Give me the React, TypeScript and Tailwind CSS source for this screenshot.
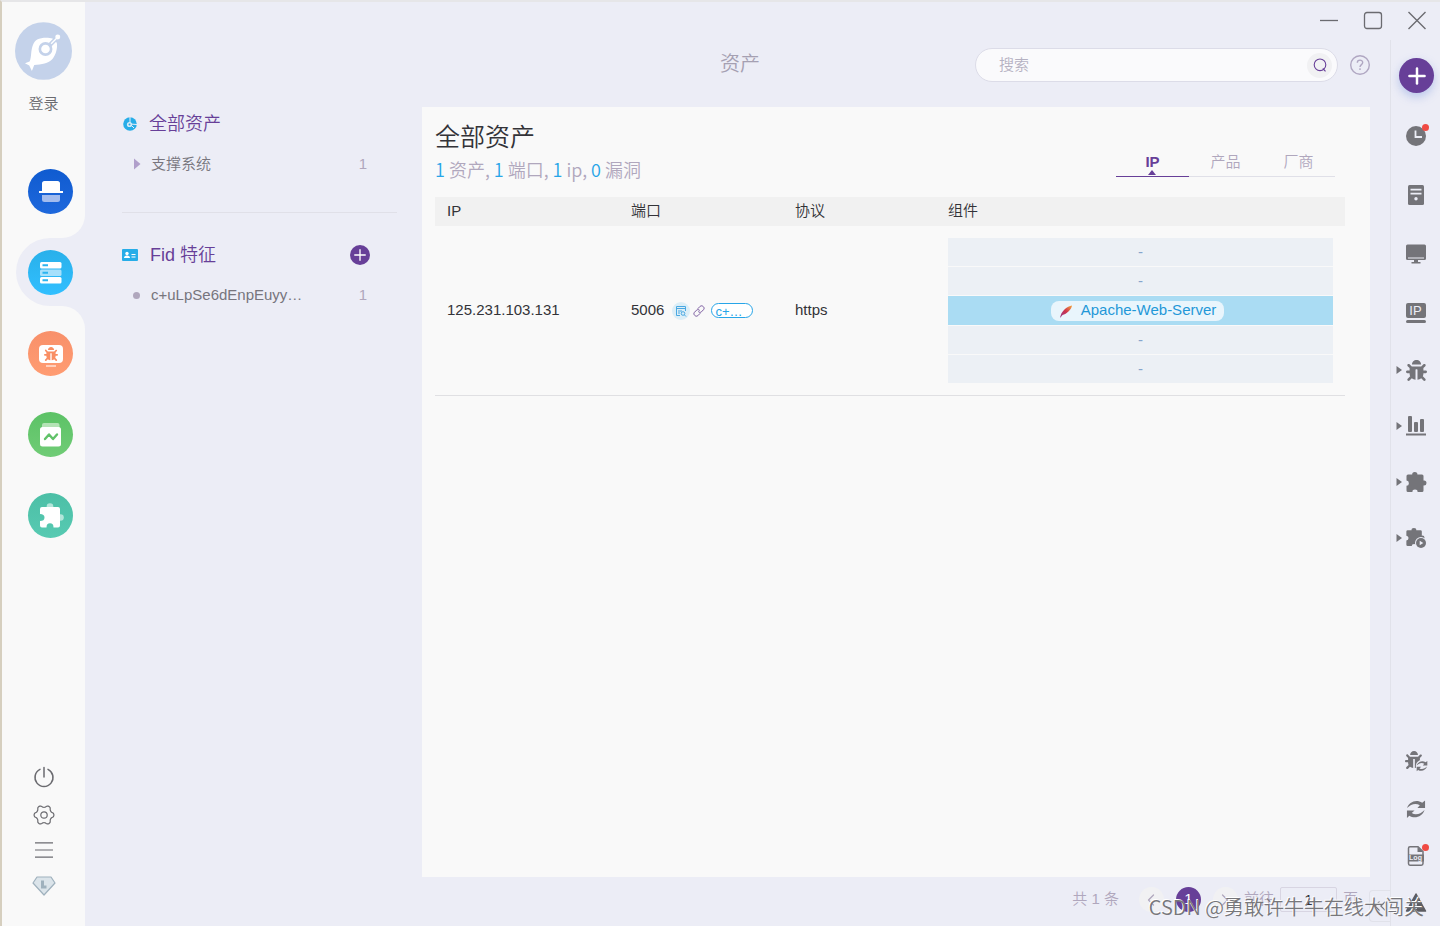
import React from 'react';
import { FaBug } from 'react-icons/fa';
import { ChevronLeft, ChevronRight, ChevronsLeft, Plus } from 'lucide-react';
import clsx from 'clsx';

// six-lobed outline of the settings icon
const gearPoints = Array.from({ length: 72 }, (_, i) => {
  const a = (i * Math.PI) / 36;
  const wave = Math.cos(6 * a);
  const r = 8.8 + 1.1 * Math.sign(wave) * Math.pow(Math.abs(wave), 0.6);
  return `${(11 + r * Math.cos(a)).toFixed(2)},${(11 + r * Math.sin(a)).toFixed(2)}`;
}).join(' ');

const Logo = () => (
  <svg viewBox="45 66 172 174" className="h-[58px] w-[57px]">
    <ellipse cx="131" cy="153" rx="86" ry="87" fill="#c4d2ea" />
    <path d="M158 115C146 112 124 112 112 118C100 125 96 142 94 158C93 170 92 178 89 185L75 190L88 197L96 213L103 195C125 194 146 190 158 177C169 164 174 142 171 128Z" fill="#fff" />
    <path d="M138 147L172 113" stroke="#c4d2ea" strokeWidth="13" />
    <circle cx="137" cy="147" r="17" fill="#fff" stroke="#c4d2ea" strokeWidth="8" />
    <path d="M154 131L172 113" stroke="#fff" strokeWidth="4" />
    <circle cx="174" cy="111" r="7.500" fill="#fff" />
  </svg>
);

const ScanIcon = () => (
  <svg viewBox="0 0 45 45" className="size-full">
    <path d="M14 22V14.500Q14 12 16.500 12H29.500Q32 12 32 14.500V22H35V24H11V22H14Z" fill="#fff" />
    <path d="M14 26H32V30.500Q32 33 29.500 33H16.500Q14 33 14 30.500Z" fill="#a3bcee" />
  </svg>
);

const AssetIcon = () => (
  <svg viewBox="0 0 45 45" className="size-full">
    <rect x="12" y="12" width="21.500" height="6.500" rx="1.500" fill="#fff" />
    <rect x="12" y="19.500" width="21.500" height="6.500" rx="1.500" fill="#a6e0fb" />
    <rect x="12" y="27" width="21.500" height="6.500" rx="1.500" fill="#fff" />
    <path d="M14.500 15.200H20M14.500 22.700H20M14.500 30.200H20" stroke="#2cb4f0" strokeWidth="2" />
  </svg>
);

const VulnIcon = () => (
  <span className="flex size-full flex-col items-center pt-[14px]">
    <span className="flex h-[18px] w-6 items-center justify-center rounded-sm bg-white">
      <FaBug className="size-[14px] text-[#f98e63]" />
    </span>
    <span className="mt-0.5 h-0.5 w-2.5 bg-[#ffd0bd]" />
  </span>
);

const ReportIcon = () => (
  <svg viewBox="0 0 45 45" className="size-full">
    <rect x="14" y="11" width="17.500" height="8" rx="2" fill="#b5e3b6" />
    <rect x="12" y="15" width="21" height="19.500" rx="2.500" fill="#fff" />
    <path d="M17 27L21 22.500L25 27L29 22.500" fill="none" stroke="#61c269" strokeWidth="2.400" strokeLinecap="round" strokeLinejoin="round" />
  </svg>
);

const PluginIcon = () => (
  <svg viewBox="0 0 45 45" className="size-full">
    <circle cx="22" cy="13.500" r="3.300" fill="#b4e6da" />
    <circle cx="32.500" cy="24.500" r="3.300" fill="#b4e6da" />
    <path d="M14 14H30Q32 14 32 16V32.500Q32 34.500 30 34.500H25.500Q25.500 30.300 22 30.300Q18.500 30.300 18.500 34.500H14Q12 34.500 12 32.500V28Q16.500 28 16.500 24.500Q16.500 21 12 21V16Q12 14 14 14Z" fill="#fff" />
  </svg>
);

const navItems = [
  { name: '扫描', icon: <ScanIcon />, bg: 'bg-linear-to-b from-[#0f5bd0] to-[#1e68dc]' },
  { name: '资产', icon: <AssetIcon />, bg: 'bg-linear-to-b from-[#29b0ea] to-[#31bfff]', active: true },
  { name: '漏洞', icon: <VulnIcon />, bg: 'bg-linear-to-b from-[#f8906a] to-[#ff9c72]' },
  { name: '报告', icon: <ReportIcon />, bg: 'bg-linear-to-b from-[#5cc266] to-[#70cc76]' },
  { name: '插件', icon: <PluginIcon />, bg: 'bg-linear-to-b from-[#4cbfa6] to-[#57cab2]' },
];

const LeftNav = () => (
  <nav className="flex w-[83px] shrink-0 flex-col items-center bg-[#f9f9f9] pt-5 pb-7">
    <Logo />
    <a href="#login" className="mt-3 text-[15px] leading-6 text-[#6b6b70]">登录</a>
    <div className="mt-[53px] flex flex-col gap-9 self-end pr-3">
      {navItems.map((item) => (
        <button key={item.name} aria-label={item.name} className="relative size-[45px]">
          {item.active && (
            <svg viewBox="0 0 69 114" className="absolute -top-[35px] -left-3 h-[114px] w-[69px] max-w-none">
              <path d="M69 0A23 23 0 0 1 46 23H34A34 34 0 0 0 34 91H46A23 23 0 0 1 69 114Z" fill="#ecedf6" />
            </svg>
          )}
          <span className={clsx('relative block size-full rounded-full', item.bg)}>{item.icon}</span>
        </button>
      ))}
    </div>
    <div className="mt-auto flex flex-col items-center gap-4">
      <button aria-label="退出" className="size-[22px]">
        <svg viewBox="0 0 22 22" fill="none" stroke="#6b6b70" strokeWidth="1.500" strokeLinecap="round">
          <path d="M11 1.500V11M7 3.400A9 9 0 1 0 15 3.400" />
        </svg>
      </button>
      <button aria-label="设置" className="size-[22px]">
        <svg viewBox="0 0 22 22" fill="none" stroke="#6b6b70" strokeWidth="1.200" strokeLinejoin="round">
          <polygon points={gearPoints} />
          <circle cx="11" cy="11" r="3.200" />
        </svg>
      </button>
      <button aria-label="菜单" className="h-4 w-[22px]">
        <svg viewBox="0 0 22 16" stroke="#6b6b70" strokeWidth="1.200">
          <path d="M2 0.800H20M2 8H20M2 15.200H20" />
        </svg>
      </button>
      <button aria-label="许可" className="flex size-6 items-center">
        <svg viewBox="0 0 24 20" fill="#dbe4ea" stroke="#9fb1bd" strokeWidth="1.200" strokeLinejoin="round">
          <path d="M5 1H19L23 7L12 19L1 7Z" />
          <path d="M10.500 4.500V11H14.500" fill="none" strokeWidth="3" strokeLinejoin="miter" />
        </svg>
      </button>
    </div>
  </nav>
);

const ClockIcon = () => (
  <svg viewBox="0 0 22 22" className="size-[22px]">
    <circle cx="11" cy="11" r="10" fill="#747479" />
    <path d="M10.500 5.500V12H17" fill="none" stroke="#ecedf6" strokeWidth="1.800" />
  </svg>
);

const ServerIcon = () => (
  <svg viewBox="0 0 22 22" className="size-[22px]">
    <rect x="3" y="1" width="16" height="20" rx="1.500" fill="#747479" />
    <path d="M5.500 5.700H16.500M5.500 9.700H16.500" stroke="#ecedf6" strokeWidth="1.800" />
    <circle cx="11" cy="14.700" r="1.700" fill="#ecedf6" />
  </svg>
);

const ScreenIcon = () => (
  <svg viewBox="0 0 22 22" className="size-[22px]">
    <path d="M2.500 1.500H19.500Q21 1.500 21 3V15.500Q21 17 19.500 17H13V19H15.500V20.500H6.500V19H9V17H2.500Q1 17 1 15.500V3Q1 1.500 2.500 1.500Z" fill="#747479" />
    <path d="M3 15H19" stroke="#ecedf6" strokeWidth="1" />
  </svg>
);

const IpIcon = () => (
  <span className="flex w-5 flex-col gap-0.5">
    <span className="rounded-xs bg-[#747479] text-center text-[13px] leading-[15px] text-[#ecedf6]">IP</span>
    <span className="h-[3px] rounded-xs bg-[#747479]" />
  </span>
);

const ChartIcon = () => (
  <svg viewBox="0 0 22 22" className="size-[22px]" fill="#747479">
    <rect x="3" y="1" width="4" height="16" rx="1" />
    <rect x="9" y="7" width="4" height="10" rx="1" />
    <rect x="15" y="4" width="4" height="13" rx="1" />
    <rect x="1" y="18.500" width="20" height="2" />
  </svg>
);

const PuzzleIcon = ({ className }: { className: string }) => (
  <svg viewBox="0 0 22 22" className={className} fill="#747479">
    <path d="M3 3.500H7.200Q7 1 9.800 1Q12.600 1 12.400 3.500H17Q18.500 3.500 18.500 5V9.500Q21.500 9.200 21.500 12Q21.500 14.800 18.500 14.500V19.500Q18.500 21 17 21H12.600Q12.600 18.600 10 18.600Q7.400 18.600 7.400 21H3Q1.500 21 1.500 19.500V14.800Q3.900 14.700 3.900 12.200Q3.900 9.700 1.500 9.600V5Q1.500 3.500 3 3.500Z" />
  </svg>
);

const SyncShape = () => (
  <g fill="#747479">
    <path d="M1 9.500C3 3 11 -0.500 17 4L20 1.500V9.500H12L14.500 6.500C10 3.700 5 5.500 1 9.500Z" />
    <path d="M19.500 11.500C17.500 18 9.500 21.500 3.500 17.500L1 20V12H9L6 14.800C10.500 17.500 15.500 15.500 19.500 11.500Z" />
  </g>
);

const SyncIcon = () => (
  <svg viewBox="0 0 21 21" className="size-5"><SyncShape /></svg>
);

const BugSyncIcon = () => (
  <span className="relative block size-[22px]">
    <FaBug className="size-[18px]" />
    <svg viewBox="-2 -2 25 25" className="absolute -right-0.5 bottom-0 size-[14px]">
      <circle cx="10.500" cy="10.500" r="11" fill="#ecedf6" />
      <SyncShape />
    </svg>
  </span>
);

const PluginPlayIcon = () => (
  <span className="relative block size-[22px]">
    <PuzzleIcon className="size-5" />
    <svg viewBox="0 0 12 12" className="absolute right-0 bottom-0 size-3">
      <circle cx="6" cy="6" r="6" fill="#ecedf6" />
      <circle cx="6" cy="6" r="5" fill="#747479" />
      <path d="M4.700 3.700L8.300 6L4.700 8.300Z" fill="#ecedf6" />
    </svg>
  </span>
);

const LogIcon = () => (
  <span className="relative block h-[22px] w-[18px]">
    <svg viewBox="0 0 18 22" className="size-full">
      <path d="M3 1.800H11L16 6.500V18.500Q16 20.200 14.300 20.200H3Q1.500 20.200 1.500 18.500V3.300Q1.500 1.800 3 1.800Z" fill="none" stroke="#747479" strokeWidth="1.500" />
      <path d="M10.500 2V7H16M1 9.500H17V16.500H1Z" fill="#747479" />
    </svg>
    <span className="absolute inset-x-0 top-[9px] text-center text-[7px] leading-[8px] font-bold text-[#ecedf6]">Log</span>
  </span>
);

const WarnIcon = () => (
  <svg viewBox="0 0 22 22" className="size-[22px]">
    <path d="M11 2L20.500 19H1.500Z" fill="#5c5c62" stroke="#5c5c62" strokeWidth="1.500" strokeLinejoin="round" />
    <path d="M11 8V13.500M11 15V17" stroke="#ecedf6" strokeWidth="1.800" />
  </svg>
);

const topTools = [
  { name: '任务', icon: <ClockIcon />, dot: true },
  { name: '服务', icon: <ServerIcon /> },
  { name: '主机', icon: <ScreenIcon /> },
  { name: 'IP', icon: <IpIcon /> },
];

const menuTools = [
  { name: '漏洞库', icon: <FaBug className="size-[21px]" /> },
  { name: '统计', icon: <ChartIcon /> },
  { name: '插件库', icon: <PuzzleIcon className="size-[22px]" /> },
  { name: '运行插件', icon: <PluginPlayIcon /> },
];

const bottomTools = [
  { name: '重扫', icon: <BugSyncIcon /> },
  { name: '刷新', icon: <SyncIcon /> },
  { name: '日志', icon: <LogIcon />, dot: true },
  { name: '警告', icon: <WarnIcon /> },
];

const RightRail = () => (
  <aside className="flex w-[50px] shrink-0 flex-col border-l border-[#e1e2ea] pt-[18px] text-[#747479]">
    <button aria-label="新建" className="ml-2 flex size-[35px] items-center justify-center rounded-full bg-[#673f98] text-white shadow-[0_4px_10px_rgba(110,140,220,0.4)]">
      <Plus size={26} strokeWidth={2.3} />
    </button>
    <div className="mt-[13px] flex flex-col">
      {topTools.map((t) => (
        <button key={t.name} aria-label={t.name} className="relative flex h-[59px] items-center justify-center">
          {t.icon}
          {t.dot && <span className="absolute top-[18px] right-[11px] size-[7px] rounded-full bg-[#f04a43]" />}
        </button>
      ))}
      {menuTools.map((t) => (
        <button key={t.name} aria-label={t.name} className="flex h-14 items-center gap-[3px] pl-[5px]">
          <svg viewBox="0 0 6 8" className="h-2 w-1.5 shrink-0"><path d="M0.500 0L6 4L0.500 8Z" fill="#747479" /></svg>
          <span className="flex w-[22px] justify-center">{t.icon}</span>
        </button>
      ))}
    </div>
    <div className="mt-auto flex flex-col">
      {bottomTools.map((t) => (
        <button key={t.name} aria-label={t.name} className="relative flex h-[47px] items-center justify-center">
          {t.icon}
          {t.dot && <span className="absolute top-3 right-[11px] size-[7px] rounded-full bg-[#f04a43]" />}
        </button>
      ))}
    </div>
  </aside>
);

const WindowBar = () => (
  <div className="flex h-[38px] items-center justify-end gap-6 pr-[13px]">
    <button aria-label="最小化" className="size-5">
      <svg viewBox="0 0 20 20" stroke="#6b6b70" strokeWidth="1.300"><path d="M1 9.500H19" /></svg>
    </button>
    <button aria-label="最大化" className="size-5">
      <svg viewBox="0 0 20 20" fill="none" stroke="#6b6b70" strokeWidth="1.300"><rect x="1.500" y="1.500" width="17" height="16" rx="2.500" /></svg>
    </button>
    <button aria-label="关闭" className="size-5">
      <svg viewBox="0 0 20 20" stroke="#6b6b70" strokeWidth="1.400"><path d="M1.500 1L18.500 18M18.500 1L1.500 18" /></svg>
    </button>
  </div>
);

const Header = () => (
  <header className="grid grid-cols-[1fr_auto_1fr] items-center pt-2 pr-5 pl-[25px]">
    <span />
    <h1 className="pb-0.5 text-[20px] leading-[30px] text-[#a5a0b2]">资产</h1>
    <div className="flex items-center justify-end gap-3">
      <div className="flex h-[34px] max-w-[363px] flex-1 items-center rounded-full border border-[#dcdce8] bg-[#fafafc] pr-[5px] pl-[23px]">
        <input aria-label="搜索" placeholder="搜索" className="min-w-0 flex-1 bg-transparent text-[15px] outline-none placeholder:text-[#b5b1c2]" />
        <button aria-label="开始搜索" className="flex size-[25px] items-center justify-center rounded-full bg-[#f1f1f3]">
          <svg viewBox="0 0 14 14" className="size-[14px]" fill="none" stroke="#673f98" strokeWidth="1.100">
            <circle cx="7" cy="6.800" r="5.800" />
            <path d="M9.800 10.500L12.500 13.300" />
          </svg>
        </button>
      </div>
      <button aria-label="帮助" className="size-5">
        <svg viewBox="0 0 20 20" fill="none" stroke="#b0a7c2" strokeWidth="1.400">
          <circle cx="10" cy="10" r="9.300" />
          <path d="M7.300 7.800C7.300 4.300 12.700 4.300 12.700 7.600C12.700 9.600 10 9.700 10 12M10 13.300V14.900" />
        </svg>
      </button>
    </div>
  </header>
);

const SideFilter = () => (
  <aside className="w-[275px] shrink-0 pt-px">
    <section className="border-b border-[#e0e0e8] pb-9">
      <h2 className="flex h-8 items-center text-[18px] text-[#673f98]">
        <svg viewBox="0 0 14 14" className="mr-3 ml-px size-[14px]">
          <circle cx="7" cy="7" r="6.800" fill="#27ade8" />
          <path d="M7 0V7L14 7.500M7 7L11 11" fill="none" stroke="#ecedf6" strokeWidth="1" />
          <circle cx="6.500" cy="7.500" r="2.600" fill="#d5ebf7" />
          <circle cx="6.500" cy="7.500" r="1" fill="#27ade8" />
        </svg>
        全部资产
      </h2>
      <a href="#support" className="mt-3 flex h-6 items-center pr-[30px] pl-[11px] text-[15px] text-[#77757d]">
        <svg viewBox="0 0 8 12" className="mr-2.5 h-3 w-2"><path d="M1 0.500L7.500 6L1 11.500Z" fill="#b09fcb" /></svg>
        支撑系统
        <span className="ml-auto text-[#b0a7bd]">1</span>
      </a>
    </section>
    <section className="mt-[26px]">
      <h2 className="flex h-8 items-center pr-[27px] text-[18px] text-[#673f98]">
        <svg viewBox="0 0 16 12" className="mr-3 h-3 w-4">
          <rect width="16" height="12" rx="1" fill="#27ade8" />
          <circle cx="5" cy="4.500" r="1.700" fill="#fff" />
          <path d="M2 9Q2 6.500 5 6.500Q8 6.500 8 9ZM9.500 5H13.500V6H9.500ZM9.500 7.500H13.500V8.500H9.500Z" fill="#fff" />
        </svg>
        Fid 特征
        <button aria-label="添加特征" className="ml-auto flex size-5 items-center justify-center rounded-full bg-[#673f98] text-white">
          <Plus size={18} strokeWidth={1.8} />
        </button>
      </h2>
      <a href="#fid" className="mt-3 flex h-6 items-center pr-[30px] pl-[11px] text-[15px] text-[#77757d]">
        <span className="mr-[11px] size-[7px] rounded-full bg-[#b0a7bd]" />
        c+uLpSe6dEnpEuyy…
        <span className="ml-auto text-[#b0a7bd]">1</span>
      </a>
    </section>
  </aside>
);

const Feather = () => (
  <svg viewBox="0 0 14 14" className="size-[14px]">
    <defs>
      <linearGradient id="feather" x1="0" y1="1" x2="1" y2="0">
        <stop offset="0" stopColor="#8e3a8c" />
        <stop offset="0.500" stopColor="#d0324b" />
        <stop offset="1" stopColor="#f5a83c" />
      </linearGradient>
    </defs>
    <path d="M1 13.500L2 10.500C3 7.500 8 2 13 1.500C13 4.500 7.500 10.500 3.500 11L1.500 13.500Z" fill="url(#feather)" />
  </svg>
);

const components = ['-', '-', 'Apache-Web-Server', '-', '-'];
const tabs = ['IP', '产品', '厂商'];
const stats = [
  ['1', '资产'],
  ['1', '端口'],
  ['1', 'ip'],
  ['0', '漏洞'],
];

const AssetPanel = () => (
  <section className="min-w-0 flex-1 bg-[#f9f9f9] pt-[14px] pr-[25px] pl-[13px]">
    <div className="flex items-end justify-between">
      <div>
        <h2 className="text-[25px] leading-8 text-[#333338]">全部资产</h2>
        <p className="font-['Noto_Sans_CJK_SC',sans-serif] text-[18px] leading-8 text-[#b0a7bd]">
          {stats.map(([n, label], i) => (
            <React.Fragment key={label}>
              <span className="text-[#27a5e8]">{n}</span> {label}{i < stats.length - 1 && ', '}
            </React.Fragment>
          ))}
        </p>
      </div>
      <div role="tablist" className="mr-[10px] mb-2 flex">
        {tabs.map((tab, i) => (
          <button
            key={tab}
            role="tab"
            aria-selected={i === 0}
            className={clsx(
              'relative h-[29px] w-[73px] border-b pt-px text-[15px]',
              i === 0 ? 'border-[#673f98] font-bold text-[#673f98]' : 'border-[#e0e0e8] text-[#b0a7bd]'
            )}
          >
            {tab}
            {i === 0 && (
              <svg viewBox="0 0 8 5" className="absolute bottom-px left-8 h-[5px] w-2"><path d="M0 5L4 0L8 5Z" fill="#673f98" /></svg>
            )}
          </button>
        ))}
      </div>
    </div>

    <table className="mt-3 w-full table-fixed text-left text-[15px] text-[#333338]">
      <thead>
        <tr className="h-[29px] bg-[#f1f1f1]">
          <th className="w-[184px] px-3 font-[350]">IP</th>
          <th className="w-[164px] px-3 font-[350]">端口</th>
          <th className="w-[153px] px-3 font-[350]">协议</th>
          <th className="px-3 font-[350]">组件</th>
        </tr>
      </thead>
      <tbody>
        <tr className="border-b border-[#e0e0e3]">
          <td className="px-3">125.231.103.131</td>
          <td className="px-3">
            <div className="flex items-center">
              5006
              <button aria-label="查看详情" className="ml-2 flex size-[18px] items-center justify-center rounded-full bg-[#dceef7]">
                <svg viewBox="0 0 12 12" className="size-3" fill="none" stroke="#4aa8e2" strokeWidth="1">
                  <path d="M5 10.500H1.500V1.500H10.500V6M1.500 3.500H10.500M3 6H7M3 8H5" />
                  <circle cx="8" cy="8.500" r="1.800" />
                  <path d="M9.500 10L11 11.500" />
                </svg>
              </button>
              <a href="#link" aria-label="链接" className="ml-[3px] size-3">
                <svg viewBox="0 0 12 12" fill="none" stroke="#7a5a9f" strokeWidth="1" strokeLinecap="round">
                  <path d="M5 3.500L7.200 1.300C9 -0.400 12.400 2.600 10.600 4.600L8.500 6.800C7.600 7.600 6.300 7.600 5.500 6.800" />
                  <path d="M7 8.500L4.800 10.700C3 12.400 -0.400 9.400 1.400 7.400L3.500 5.200C4.400 4.400 5.700 4.400 6.500 5.200" />
                </svg>
              </a>
              <span className="ml-1.5 h-[15px] w-[42px] rounded-full border border-[#27a5e8] bg-white px-[3px] text-[13px] leading-[15px] text-[#27a5e8]">c+…</span>
            </div>
          </td>
          <td className="px-3">https</td>
          <td className="px-3 py-3">
            <ul className="flex flex-col gap-px text-center">
              {components.map((name, i) =>
                name === '-' ? (
                  <li key={i} className="h-7 bg-[#ecf0f5] leading-7 text-[#86a5cc]">-</li>
                ) : (
                  <li key={i} className="flex h-[29px] items-center justify-center bg-[#aadcf3] pr-1.5">
                    <a href="#apache" className="flex h-5 items-center gap-2 rounded-lg bg-[#e9f5fc] px-2 text-[#1f98d8]">
                      <Feather />
                      {name}
                    </a>
                  </li>
                )
              )}
            </ul>
          </td>
        </tr>
      </tbody>
    </table>
  </section>
);

const Pagination = () => (
  <footer className="flex h-[49px] items-center justify-end pr-8 pb-1 text-[15px] text-[#b0a7bd]">
    <span>共 1 条</span>
    <button aria-label="上一页" className="ml-5 flex size-[25px] items-center justify-center rounded-full bg-[#f1f1f3]"><ChevronLeft size={20} strokeWidth={1.5} /></button>
    <button className="ml-3 size-[25px] rounded-full bg-[#673f98] text-white">1</button>
    <button aria-label="下一页" className="ml-3 flex size-[25px] items-center justify-center rounded-full bg-[#f1f1f3]"><ChevronRight size={20} strokeWidth={1.5} /></button>
    <label htmlFor="page" className="ml-1.5">前往</label>
    <input id="page" defaultValue="1" className="mx-1.5 h-[25px] w-[57px] rounded-xs border border-[#d8d5e2] bg-transparent text-center text-[#333338]" />
    <span>页</span>
  </footer>
);

const App: React.FC = () => {
  return (
    <div className="relative flex min-h-screen overflow-hidden border-t-2 border-l-2 border-t-[#e6e6e8] border-l-[#d6cfbf] bg-[#ecedf6] font-['Liberation_Sans','Noto_Sans_CJK_SC',sans-serif] font-[350]">
      <LeftNav />
      <div className="flex min-w-0 flex-1 flex-col">
        <WindowBar />
        <div className="flex flex-1">
          <main className="relative flex min-w-0 flex-1 flex-col">
            <Header />
            <div className="mt-[25px] flex flex-1 gap-[25px] pr-5 pl-[37px]">
              <SideFilter />
              <AssetPanel />
            </div>
            <Pagination />
            <button aria-label="收起" className="absolute right-0 bottom-1 flex h-8 w-[21px] items-center justify-center rounded-l border border-r-0 border-[#e1e2ea] text-[#747479]">
              <ChevronsLeft size={20} strokeWidth={1.3} />
            </button>
          </main>
          <RightRail />
        </div>
      </div>
      <p className="pointer-events-none absolute right-4 bottom-1 font-['Noto_Sans_CJK_SC',sans-serif] text-[20px] leading-[30px] text-[#77777b] [text-shadow:-1px_-1px_0_#ffffff]">CSDN @勇敢许牛牛在线大闯关</p>
    </div>
  );
};

export default App;
